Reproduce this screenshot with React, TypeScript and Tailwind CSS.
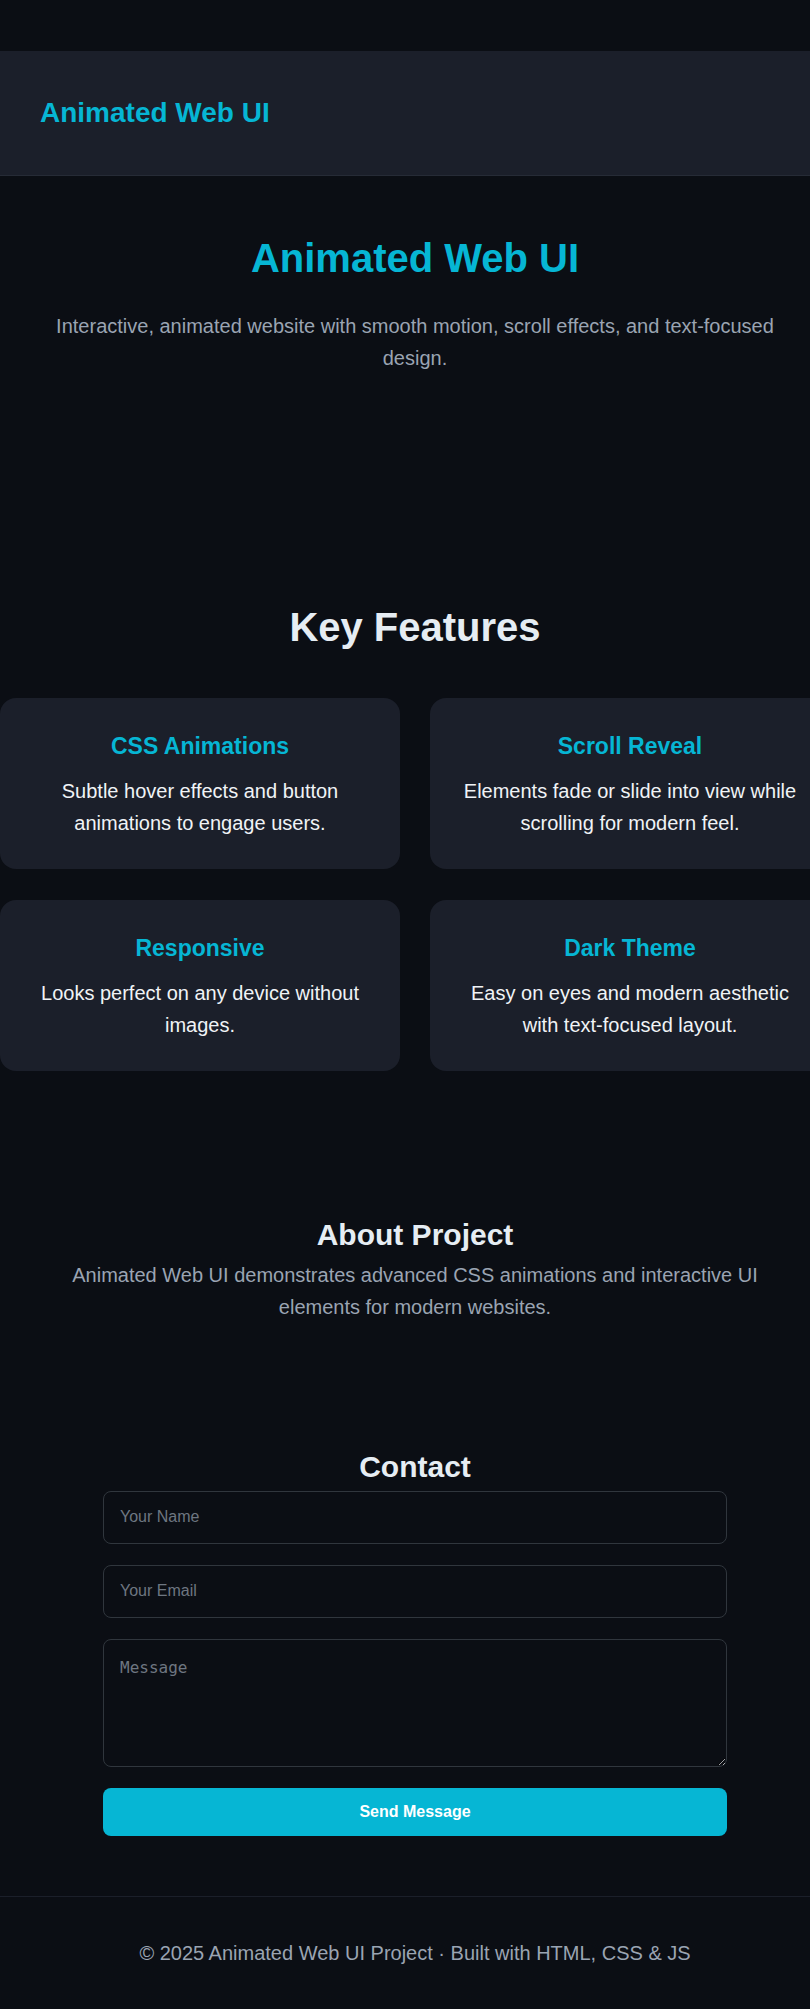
const features = [
  {
    title: "CSS Animations",
    text: "Subtle hover effects and button animations to engage users.",
  },
  {
    title: "Scroll Reveal",
    text: "Elements fade or slide into view while scrolling for modern feel.",
  },
  {
    title: "Responsive",
    text: "Looks perfect on any device without images.",
  },
  {
    title: "Dark Theme",
    text: "Easy on eyes and modern aesthetic with text-focused layout.",
  },
];

const App: React.FC = () => {
  return (
    <div className="min-h-screen w-full overflow-hidden bg-[#0b0e14] font-['Liberation_Sans',Arial,sans-serif]">
      <div className="w-[830px] pt-[51px]">
        <header className="flex h-[125px] items-center border-b border-[#262b36] bg-[#1b1f2a] px-10">
          <span className="text-[28px] font-bold leading-none text-[#06b6d4]">Animated Web UI</span>
        </header>

        <section className="px-10 pt-[58px] text-center">
          <h1 className="text-[40px] font-bold leading-[48px] text-[#06b6d4]">Animated Web UI</h1>
          <p className="mt-[28px] text-[20px] leading-[32px] text-[#9aa4b2]">
            Interactive, animated website with smooth motion, scroll effects, and text-focused design.
          </p>
        </section>

        <section className="mt-[229px]">
          <h2 className="text-center text-[40px] font-bold leading-[48px] text-[#e6edf3]">Key Features</h2>
          <div className="mt-[47px] grid grid-cols-2 gap-x-[30px] gap-y-[31px]">
            {features.map((f) => (
              <div key={f.title} className="rounded-[16px] bg-[#1b1f2a] p-[30px] text-center">
                <h3 className="mb-[10px] text-[23px] font-bold leading-[1.6] text-[#06b6d4]">{f.title}</h3>
                <p className="text-[20px] leading-[32px] text-[#f0f3f6]">{f.text}</p>
              </div>
            ))}
          </div>
        </section>

        <section className="mt-[140px] px-10 text-center">
          <h2 className="text-[30px] font-bold leading-[48px] text-[#e6edf3]">About Project</h2>
          <p className="text-[20px] leading-[32px] text-[#9aa4b2]">
            Animated Web UI demonstrates advanced CSS animations and interactive UI elements for modern websites.
          </p>
        </section>

        <section className="mt-[120px]">
          <h2 className="text-center text-[30px] font-bold leading-[48px] text-[#e6edf3]">Contact</h2>
          <form className="mx-auto flex w-[624px] flex-col gap-[21px]" onSubmit={(e) => e.preventDefault()}>
            <input
              type="text"
              placeholder="Your Name"
              className="h-[53px] w-full rounded-lg border border-[#30363d] bg-transparent px-4 text-[16px] text-[#e6edf3] outline-none placeholder:text-[#6e7681]"
            />
            <input
              type="email"
              placeholder="Your Email"
              className="h-[53px] w-full rounded-lg border border-[#30363d] bg-transparent px-4 text-[16px] text-[#e6edf3] outline-none placeholder:text-[#6e7681]"
            />
            <textarea
              placeholder="Message"
              className="h-[128px] w-full rounded-lg border border-[#30363d] bg-transparent p-4 font-['DejaVu_Sans_Mono',monospace] text-[16px] text-[#e6edf3] outline-none [color-scheme:dark] placeholder:text-[#6e7681]"
            />
            <button
              type="submit"
              className="h-[48px] w-full rounded-lg bg-[#06b6d4] text-[16px] font-bold text-white"
            >
              Send Message
            </button>
          </form>
        </section>

        <footer className="mt-[60px] border-t border-[#1b1f2a] py-10 text-center">
          <p className="text-[20px] leading-[32px] text-[#9aa4b2]">
            © 2025 Animated Web UI Project · Built with HTML, CSS &amp; JS
          </p>
        </footer>
      </div>
    </div>
  );
};

export default App;
